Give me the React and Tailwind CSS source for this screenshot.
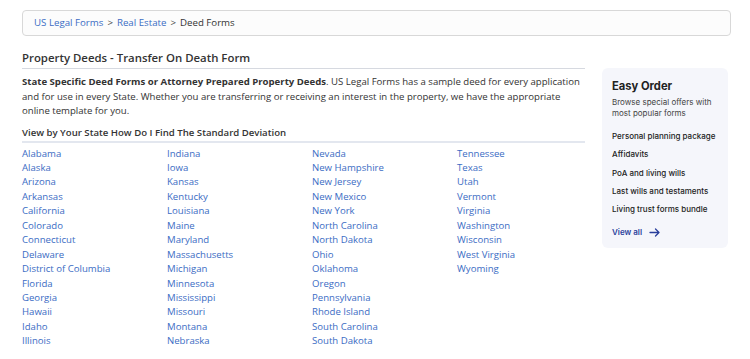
import React from 'react';

const columns = [
    ['Alabama', 'Alaska', 'Arizona', 'Arkansas', 'California', 'Colorado', 'Connecticut', 'Delaware', 'District of Columbia', 'Florida', 'Georgia', 'Hawaii', 'Idaho', 'Illinois'],
    ['Indiana', 'Iowa', 'Kansas', 'Kentucky', 'Louisiana', 'Maine', 'Maryland', 'Massachusetts', 'Michigan', 'Minnesota', 'Mississippi', 'Missouri', 'Montana', 'Nebraska'],
    ['Nevada', 'New Hampshire', 'New Jersey', 'New Mexico', 'New York', 'North Carolina', 'North Dakota', 'Ohio', 'Oklahoma', 'Oregon', 'Pennsylvania', 'Rhode Island', 'South Carolina', 'South Dakota'],
    ['Tennessee', 'Texas', 'Utah', 'Vermont', 'Virginia', 'Washington', 'Wisconsin', 'West Virginia', 'Wyoming'],
];

const easyOrder = ['Personal planning package', 'Affidavits', 'PoA and living wills', 'Last wills and testaments', 'Living trust forms bundle'];

const App = () => {
    return (
        <div className="w-[750px] h-[359px] overflow-hidden bg-white font-['Open_Sans',sans-serif] text-[#333]">
            <div className="pt-[10px] pl-[22px] pr-[19px]">
                <div className="h-[26px] flex items-center px-[11px] border border-[#d8d8d8] rounded-[4px] bg-[#fcfcfc] text-[9.7px]">
                    <a className="text-[#3b6cc4]">US Legal Forms</a>
                    <span className="mx-[4px] text-[#444]">&gt;</span>
                    <a className="text-[#3b6cc4]">Real Estate</a>
                    <span className="mx-[4px] text-[#444]">&gt;</span>
                    <span className="text-[#333]">Deed Forms</span>
                </div>
            </div>

            <div className="flex px-[22px] pt-[14px]">
                <div className="w-[563px]">
                    <h1 className="text-[11.4px] font-semibold leading-[16px] pb-[2px] border-b border-[#d6d9e0]">
                        Property Deeds - Transfer On Death Form
                    </h1>
                    <p className="text-[9.6px] leading-[14.5px] mt-[6px] text-[#333]">
                        <b className="font-bold">State Specific Deed Forms or Attorney Prepared Property Deeds</b>. US Legal Forms has a sample deed for every application and for use in every State. Whether you are transferring or receiving an interest in the property, we have the appropriate online template for you.
                    </p>
                    <h2 className="mt-[7px] text-[9.6px] font-semibold leading-[14px] pb-[1px] border-b-2 border-[#e3e7ef]">
                        View by Your State How Do I Find The Standard Deviation
                    </h2>
                    <div className="grid grid-cols-[145px_145px_145px_145px] mt-[4px]">
                        {columns.map((col, i) => (
                            <ul key={i}>
                                {col.map((s) => (
                                    <li key={s} className="text-[9.6px] leading-[14.45px] text-[#3b6cc4]">{s}</li>
                                ))}
                            </ul>
                        ))}
                    </div>
                </div>

                <div className="ml-[17px] mt-[18px] w-[128px] h-[180px] rounded-[6px] bg-[#f5f6fb] px-[10px] pt-[10px] font-['Inter',sans-serif]">
                    <div className="text-[11.2px] font-bold text-[#222] leading-[16px]">Easy Order</div>
                    <p className="text-[8px] leading-[11px] text-[#444] mt-[3px]">Browse special offers with most popular forms</p>
                    <ul className="mt-[8px]">
                        {easyOrder.map((item) => (
                            <li key={item} className="text-[8px] font-medium leading-[18.25px] text-[#222] whitespace-nowrap">{item}</li>
                        ))}
                    </ul>
                    <a className="mt-[8px] flex items-center gap-[7px] text-[8px] leading-[12px] font-semibold text-[#2a3f9b]">
                        View all
                        <svg width="11" height="9" viewBox="0 0 11 9" fill="none" stroke="#2a3f9b" strokeWidth="1.3" strokeLinecap="round" strokeLinejoin="round">
                            <path d="M1 4.5h9M6.5 1l3.5 3.5L6.5 8" />
                        </svg>
                    </a>
                </div>
            </div>
        </div>
    );
};

export default App;
